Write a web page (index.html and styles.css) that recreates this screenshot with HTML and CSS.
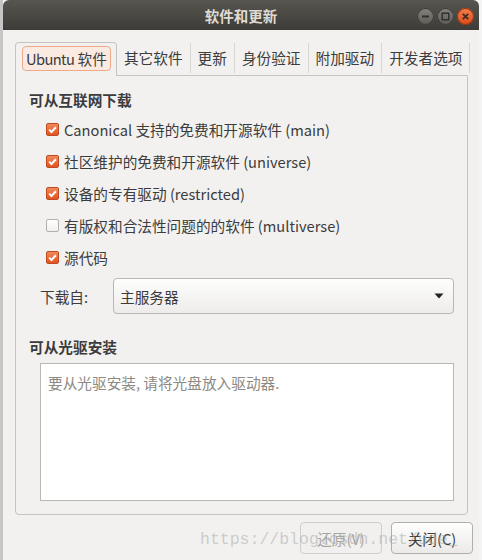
FILE: index.html
```html
<!DOCTYPE html>
<html lang="zh-CN">
<head>
  <meta charset="UTF-8" />
  <meta name="viewport" content="width=device-width, initial-scale=1.0">
  <title>软件和更新</title>
  <link rel="stylesheet" href="styles.css">
</head>
<body>
  <div class="desktop">
    <div class="window">
      <div class="titlebar">
        <span></span>
        <span class="title">软件和更新</span>
        <div class="controls">
          <span class="wbtn">
            <svg width="17" height="17" viewBox="0 0 17 17"><path d="M5 8.5h7" stroke="#33322e" stroke-width="1.8"/></svg>
          </span>
          <span class="wbtn">
            <svg width="17" height="17" viewBox="0 0 17 17"><rect x="5.2" y="5.2" width="6.6" height="6.6" fill="none" stroke="#33322e" stroke-width="1.5"/></svg>
          </span>
          <span class="wbtn wbtn-close">
            <svg width="17" height="17" viewBox="0 0 17 17"><path d="M5.8 5.8l5.4 5.4M11.2 5.8l-5.4 5.4" stroke="#3a2c24" stroke-width="1.7"/></svg>
          </span>
        </div>
      </div>

      <div class="content">
        <div class="tabs">
          <div class="tab active"><span class="focus"><span class="latin">Ubuntu</span> 软件</span></div>
          <div class="tab">其它软件</div>
          <div class="tab">更新</div>
          <div class="tab">身份验证</div>
          <div class="tab">附加驱动</div>
          <div class="tab">开发者选项</div>
        </div>

        <div class="panel">
          <div class="heading">可从互联网下载</div>
          <div class="checks">
            <label class="check"><span class="box on"><svg width="13" height="13" viewBox="0 0 13 13"><path d="M3.2 6.6l2.3 2.4 4.4-4.8" fill="none" stroke="#fff" stroke-width="2"/></svg></span>Canonical 支持的免费和开源软件 (main)</label>
            <label class="check"><span class="box on"><svg width="13" height="13" viewBox="0 0 13 13"><path d="M3.2 6.6l2.3 2.4 4.4-4.8" fill="none" stroke="#fff" stroke-width="2"/></svg></span>社区维护的免费和开源软件 (universe)</label>
            <label class="check"><span class="box on"><svg width="13" height="13" viewBox="0 0 13 13"><path d="M3.2 6.6l2.3 2.4 4.4-4.8" fill="none" stroke="#fff" stroke-width="2"/></svg></span>设备的专有驱动 (restricted)</label>
            <label class="check"><span class="box"></span>有版权和合法性问题的的软件 (multiverse)</label>
            <label class="check"><span class="box on"><svg width="13" height="13" viewBox="0 0 13 13"><path d="M3.2 6.6l2.3 2.4 4.4-4.8" fill="none" stroke="#fff" stroke-width="2"/></svg></span>源代码</label>
          </div>

          <div class="source-row">
            <span class="source-label">下载自:</span>
            <div class="combo">
              <span>主服务器</span>
              <svg width="10" height="6" viewBox="0 0 10 6"><path d="M0.5 0.5h9L5 5.5z" fill="#222"/></svg>
            </div>
          </div>

          <div class="heading heading-cd">可从光驱安装</div>
          <div class="cdbox">要从光驱安装, 请将光盘放入驱动器.</div>
        </div>

        <div class="actions">
          <button class="btn" disabled>还原(V)</button>
          <button class="btn">关闭(C)</button>
        </div>
      </div>

      <div class="watermark">https://blog.csdn.net/ude_</div>
    </div>
  </div>
</body>
</html>
```

FILE: styles.css
```css
body {
  margin: 0;
  width: 482px;
  height: 560px;
  overflow: hidden;
  font-family: "Noto Sans CJK SC", "Noto Sans", sans-serif;
  color: #3c3c3c;
}
.desktop {
  display: flex;
  height: 560px;
  background: linear-gradient(to right, #c6c6c6 0 3px, #f4f4f4 3px);
}
.window {
  margin-left: 3px;
  width: 476px;
  height: 560px;
  flex: none;
  background-color: #f2f1f0;
  border-radius: 6px 6px 0 0;
  position: relative;
  display: flex;
  flex-direction: column;
  overflow: hidden;
}
.titlebar {
  height: 30px;
  flex: none;
  box-sizing: border-box;
  padding-top: 2px;
  background: linear-gradient(#57554f, #3d3c38);
  display: grid;
  grid-template-columns: 1fr auto 1fr;
  align-items: center;
}
.title {
  color: #dfdbd2;
  font-weight: bold;
  font-size: 14.5px;
  line-height: 20px;
}
.controls {
  justify-self: end;
  display: flex;
  gap: 3px;
  margin-right: 5px;
}
.wbtn {
  width: 17px;
  height: 17px;
  border-radius: 50%;
  background: linear-gradient(#85837e, #5d5b56);
  box-shadow: inset 0 0 0 1px #3a3934;
  display: flex;
}
.wbtn-close {
  background: linear-gradient(#f3804f, #dc4a17);
  box-shadow: inset 0 0 0 1px #8e3412;
}
.content {
  padding: 12px 6px 0 12px;
  display: flex;
  flex-direction: column;
}
.tabs {
  display: flex;
  align-items: flex-start;
  position: relative;
  z-index: 1;
  margin-bottom: -1px;
}
.tab {
  flex: none;
  white-space: nowrap;
  font-size: 14.67px;
  line-height: 30px;
  padding: 0 7px;
  margin-top: 1px;
  border-right: 1px solid #d8d6d2;
}
.tab.active {
  margin-top: 0;
  padding: 3px 5px 5px 6px;
  border: 1px solid #c6c4bf;
  border-bottom: none;
  border-radius: 4px 4px 0 0;
  background-color: #f2f1f0;
  line-height: 23px;
}
.focus {
  display: block;
  padding: 0 3px;
  border: 1px solid #eea98b;
  border-radius: 4px;
  background-color: #fbeae2;
}
.latin {
  letter-spacing: -0.6px;
}
.panel {
  height: 440px;
  flex: none;
  box-sizing: border-box;
  margin-right: 5px;
  padding: 14px 13px 0 13px;
  border: 1px solid #c6c4bf;
  border-radius: 0 0 4px 4px;
}
.heading {
  font-weight: bold;
  font-size: 14.67px;
  line-height: 20px;
}
.checks {
  margin-top: 3px;
  padding-left: 17px;
}
.check {
  display: flex;
  align-items: center;
  gap: 5px;
  height: 32px;
  font-size: 14.67px;
}
.box {
  width: 13px;
  height: 13px;
  box-sizing: border-box;
  border: 1px solid #b3b0ab;
  border-radius: 2px;
  background: linear-gradient(#ffffff, #f1f0ee);
  display: flex;
}
.box svg {
  margin: -1px;
}
.box.on {
  border-color: #bd4c22;
  background: linear-gradient(#f2875a, #e1541f);
}
.source-row {
  display: flex;
  align-items: center;
  margin-top: 5px;
  padding-left: 11px;
}
.source-label {
  width: 73px;
  flex: none;
  font-size: 14.67px;
}
.combo {
  flex: 1;
  height: 36px;
  box-sizing: border-box;
  padding: 0 9px 0 6px;
  border: 1px solid #b9b7b2;
  border-radius: 4px;
  background: linear-gradient(#fefefe, #edecea);
  display: flex;
  align-items: center;
  justify-content: space-between;
  font-size: 14.67px;
}
.heading-cd {
  margin-top: 23px;
}
.cdbox {
  margin: 6px 0 0 11px;
  height: 138px;
  box-sizing: border-box;
  padding: 9px 7px;
  border: 1px solid #bab8b3;
  background-color: #ffffff;
  color: #8d8984;
  font-size: 14.67px;
  line-height: 20px;
}
.actions {
  display: flex;
  justify-content: flex-end;
  gap: 9px;
  margin-top: 7px;
}
.btn {
  width: 82px;
  height: 32px;
  padding: 0;
  border: 1px solid #b0aea9;
  border-radius: 4px;
  background: linear-gradient(#fefefe, #ebeae8);
  font-family: inherit;
  font-size: 14.67px;
  color: #3c3c3c;
}
.btn:disabled {
  border-color: #d0cec9;
  background: #f1f0ee;
  color: #a8a5a0;
}
.watermark {
  position: absolute;
  left: 197px;
  top: 529px;
  z-index: 2;
  font-family: "Liberation Mono", monospace;
  font-size: 16.5px;
  line-height: 22px;
  color: rgba(165, 165, 165, 0.5);
  pointer-events: none;
}
```
